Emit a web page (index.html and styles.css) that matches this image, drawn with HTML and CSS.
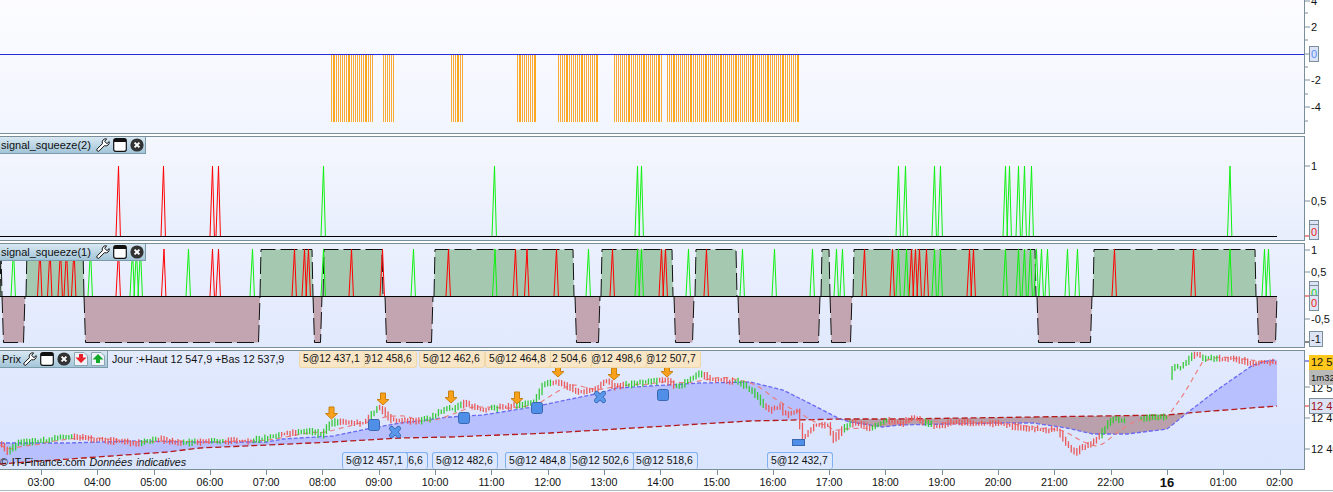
FILE: index.html
```html
<!DOCTYPE html>
<html lang="fr">
<head>
<meta charset="utf-8">
<title>Prix</title>
<link rel="stylesheet" href="styles.css">
</head>
<body>
<svg class="defs" width="0" height="0" aria-hidden="true">
  <symbol id="i-wrench" viewBox="0 0 14 14"><path d="M10 .8a3.6 3.6 0 0 0-3.6 4.9L1.2 10.9a1.4 1.4 0 0 0 2 2l5.2-5.2A3.6 3.6 0 0 0 13.2 3.6L11 5.6 8.6 3.4 10.6.9Z" fill="#fff" stroke="#111"/></symbol>
  <symbol id="i-window" viewBox="0 0 14 14"><rect x=".7" y=".7" width="12.6" height="12.6" rx="2" fill="#fff" stroke="#111" stroke-width="1.2"/><rect x="1" y="1" width="12" height="3" fill="#111"/></symbol>
  <symbol id="i-close" viewBox="0 0 14 14"><circle cx="7" cy="7" r="6.6" fill="#333"/><path d="M4.6 4.6l4.8 4.8M9.4 4.6L4.6 9.4" stroke="#fff" stroke-width="2"/></symbol>
  <symbol id="i-down" viewBox="0 0 14 14"><path d="M.5.5h9.5l3.5 3.5v9.5H.5Z" fill="#eef3fa" stroke="#8fa5b5"/><path d="M5 2h4v3.5h3.5L7 11 1.500 5.500H5Z" fill="#e8222a"/></symbol>
  <symbol id="i-up" viewBox="0 0 14 14"><path d="M.5.5h9.5l3.5 3.500v9.500H.5Z" fill="#eef3fa" stroke="#8fa5b5"/><path d="M7 2l5.500 5.500H9V11H5V7.500H1.500Z" fill="#12a82a"/></symbol>
</svg>
<main class="chart">
  <section class="pane pane-osc">
    <div class="plot plot-osc"><svg id="p1" class="layer" viewBox="0 0 1304 133" width="1304" height="133"></svg></div>
    <svg class="axis" viewBox="1305 0 28 134" width="28" height="134">
      <path class="tick" d="M1305 1h5M1305 13h3M1305 27h5M1305 40h3M1305 54h5M1305 67h3M1305 80h5M1305 94h3M1305 107h5M1305 121h3"/>
      <text x="1311" y="5">4</text><text x="1311" y="31">2</text>
      <text x="1311" y="84">-2</text><text x="1311" y="111">-4</text>
      <rect class="box" x="1309.5" y="46.5" width="9" height="15"/><text class="t-blue" x="1311" y="58">0</text>
    </svg>
  </section>
  <section class="pane pane-s2">
    <div class="plot plot-s2">
      <svg id="p2" class="layer" viewBox="0 137 1304 103" width="1304" height="103"></svg>
      <div class="legend">
        <span class="legend-name">signal_squeeze(2)</span>
        <svg class="ico"><use href="#i-wrench"/></svg><svg class="ico"><use href="#i-window"/></svg><svg class="ico"><use href="#i-close"/></svg>
      </div>
    </div>
    <svg class="axis" viewBox="1305 136 28 105" width="28" height="105">
      <path class="tick" d="M1305 166h5M1305 201h5"/><path class="tick-red" d="M1305 236h4"/>
      <text x="1311" y="170">1</text><text x="1311" y="205">0,5</text>
      <rect class="box" x="1309.5" y="220.5" width="9" height="19"/><path class="tick" d="M1310 224.5h8"/>
      <text class="t-red" x="1311" y="236">0</text>
    </svg>
  </section>
  <section class="pane pane-s1">
    <div class="plot plot-s1">
      <svg id="p3" class="layer" viewBox="0 244 1304 103" width="1304" height="103"></svg>
      <div class="legend">
        <span class="legend-name">signal_squeeze(1)</span>
        <svg class="ico"><use href="#i-wrench"/></svg><svg class="ico"><use href="#i-window"/></svg><svg class="ico"><use href="#i-close"/></svg>
      </div>
    </div>
    <svg class="axis" viewBox="1305 243 28 105" width="28" height="105">
      <path class="tick" d="M1305 250h5M1305 272h5M1305 319h5"/><path class="tick-red" d="M1305 296h4"/><path class="tick-dark" d="M1305 342h4"/>
      <text x="1311" y="254">1</text><text x="1311" y="276">0,5</text><text x="1311" y="323">-0,5</text>
      <rect class="box" x="1309.5" y="281.5" width="9" height="15"/><text class="t-dark" x="1311" y="293">0</text>
      <rect class="box" x="1309.5" y="285.5" width="9" height="15"/><text class="t-green" x="1311" y="297">0</text>
      <rect class="box" x="1309.5" y="295.5" width="9" height="15"/><text class="t-red" x="1311" y="307">0</text>
      <rect class="box" x="1309.5" y="331.5" width="13" height="15"/><text x="1311" y="343">-1</text>
    </svg>
  </section>
  <section class="pane pane-price">
    <div class="plot plot-price">
      <svg id="p4" class="layer" viewBox="0 351 1304 118" width="1304" height="118"></svg>
      <div class="legend legend-price">
        <span class="legend-name">Prix</span>
        <svg class="ico"><use href="#i-wrench"/></svg><svg class="ico"><use href="#i-window"/></svg><svg class="ico"><use href="#i-close"/></svg><svg class="ico"><use href="#i-down"/></svg><svg class="ico"><use href="#i-up"/></svg>
      </div>
      <p class="quote">Jour :+Haut 12 547,9 +Bas 12 537,9</p>
      <span class="tag tag-sell" style="left:635px">5@12 507,7</span>
      <span class="tag tag-sell" style="left:581px">5@12 498,6</span>
      <span class="tag tag-sell" style="left:526px">5@12 504,6</span>
      <span class="tag tag-sell" style="left:485px">5@12 464,8</span>
      <span class="tag tag-sell" style="left:419px">5@12 462,6</span>
      <span class="tag tag-sell" style="left:351px">5@12 458,6</span>
      <span class="tag tag-sell" style="left:299px">5@12 437,1</span>
      <p class="credit">© IT-Finance.com <em>Données indicatives</em></p>
      <span class="tag tag-buy" style="left:767px">5@12 432,7</span>
      <span class="tag tag-buy" style="left:632px">5@12 518,6</span>
      <span class="tag tag-buy" style="left:568px">5@12 502,6</span>
      <span class="tag tag-buy" style="left:505px">5@12 484,8</span>
      <span class="tag tag-buy" style="left:432px">5@12 482,6</span>
      <span class="tag tag-buy" style="left:362px">5@12 466,6</span>
      <span class="tag tag-buy" style="left:342px">5@12 457,1</span>
    </div>
    <svg class="axis" viewBox="1305 350 28 120" width="28" height="120">
      <path class="tick" d="M1305 387h5M1305 418h5M1305 449h5"/><path class="tick-red" d="M1305 406h4"/><path class="tick-blue" d="M1305 361h4"/>
      <text x="1311" y="392">12 519,0</text><text x="1311" y="422">12 450,0</text><text x="1311" y="453">12 400,0</text>
      <rect class="last" x="1309" y="355" width="26" height="15"/><text x="1311" y="366">12 542,7</text>
      <rect class="timer" x="1309" y="370" width="26" height="15"/><text class="t-timer" x="1311" y="381">1m32</text>
      <rect class="box" x="1309.5" y="398.5" width="26" height="15"/><text class="t-darkred" x="1311" y="410">12 471,2</text>
    </svg>
  </section>
  <footer class="time-axis">
    <span class="hour">03:00</span><span class="hour">04:00</span><span class="hour">05:00</span><span class="hour">06:00</span><span class="hour">07:00</span><span class="hour">08:00</span><span class="hour">09:00</span><span class="hour">10:00</span><span class="hour">11:00</span><span class="hour">12:00</span><span class="hour">13:00</span><span class="hour">14:00</span><span class="hour">15:00</span><span class="hour">16:00</span><span class="hour">17:00</span><span class="hour">18:00</span><span class="hour">19:00</span><span class="hour">20:00</span><span class="hour">21:00</span><span class="hour">22:00</span><span class="hour hour-day">16</span><span class="hour">01:00</span><span class="hour">02:00</span>
  </footer>
</main>
<script src="chart.js"></script>
</body>
</html>
```
FILE: styles.css
```css
* { box-sizing: border-box; }
html, body { margin: 0; height: 492px; overflow: hidden; background: #fff; }
body { font: 10.7px "Liberation Sans", Arial, sans-serif; color: #111; }
.defs { position: absolute; }
.chart { display: flex; flex-direction: column; gap: 2px; width: 1333px; }
.pane { display: flex; flex: none; }
.pane-osc { height: 134px; }
.pane-s2 { height: 105px; }
.pane-s1 { height: 105px; }
.pane-price { height: 120px; }
.plot {
  position: relative;
  width: 1305px;
  flex: none;
  border: 1px solid #7b8f9b;
  border-left: 0;
  overflow: hidden;
}
.plot-osc { border-top: 0; background: linear-gradient(#fcfcff, #f1f5fe); }
.plot-s2 { background: linear-gradient(#f5f7fe, #e7eefc); }
.plot-s1 { background: linear-gradient(#ebf0fe, #e1e9fd); }
.plot-price { background: linear-gradient(#e3eafe, #d9e4fd); }
.layer { display: block; }
.axis { flex: none; display: block; font: 11px "Liberation Sans", Arial, sans-serif; fill: #111; overflow: hidden; }
.tick { stroke: #7b8f9b; fill: none; }
.tick-red { stroke: #e02020; fill: none; }
.tick-dark { stroke: #111; fill: none; }
.tick-blue { stroke: #2a2ae0; fill: none; }
.box { fill: #dbe3f4; stroke: #7b8f9b; }
.last { fill: #ffc81c; }
.timer { fill: #b9b9b9; }
.t-blue { fill: #5a8cff; }
.t-red { fill: #f01818; }
.t-green { fill: #20d020; }
.t-dark { fill: #333; }
.t-darkred { fill: #a01020; }
.t-timer { font-size: 9.5px; }
.legend {
  position: absolute;
  top: 0;
  left: 0;
  display: flex;
  align-items: center;
  gap: 3px;
  width: 146px;
  height: 17px;
  padding-left: 1px;
  font-size: 11px;
  background: linear-gradient(#d8e8f2, #a3c5d8);
  border: 1px solid #7b9aaa;
  border-width: 0 1px 1px 0;
}
.legend-name { width: 92px; flex: none; }
.legend-price { width: 108px; padding-left: 2px; }
.legend-price .legend-name { width: 18px; }
.ico { width: 14px; height: 14px; flex: none; }
.quote { position: absolute; top: 2px; left: 112px; margin: 0; white-space: nowrap; }
.tag {
  position: absolute;
  width: 66px;
  height: 17px;
  padding-left: 3px;
  line-height: 15px;
  white-space: nowrap;
  border: 1px solid;
  border-radius: 3px;
  font-size: 10.4px;
}
.tag-sell { top: 0; background: #f9e6c6; border-color: #efd7a8; border-top: 0; }
.tag-buy { bottom: 0; background: #dde8fe; border-color: #7fb0f0; border-bottom: 0; }
.credit { position: absolute; left: 0; bottom: 0; margin: 0; white-space: nowrap; line-height: 13px; word-spacing: 1px; }
.time-axis {
  display: flex;
  flex: none;
  height: 21px;
  padding-left: 12.85px;
  margin-top: -2px;
  border-bottom: 1px solid #a9b9c4;
}
.hour {
  position: relative;
  width: 56.3px;
  flex: none;
  padding-top: 6px;
  text-align: center;
  line-height: 13px;
}
.hour::before {
  content: "";
  position: absolute;
  top: 0;
  left: 50%;
  width: 1px;
  height: 5px;
  background: #7b8f9b;
}
.hour-day { font-weight: bold; font-size: 13px; }
```
FILE: chart.js
```js
(function () {
  var NS = 'http://www.w3.org/2000/svg';
  function add(svg, tag, attrs) {
    var el = document.createElementNS(NS, tag);
    for (var k in attrs) el.setAttribute(k, attrs[k]);
    svg.appendChild(el);
    return el;
  }
  function poly(pts) {
    return pts.map(function (p, i) { return (i ? 'L' : 'M') + p[0] + ' ' + p[1]; }).join('');
  }

  /* Pane 1: orange bars, walked on one global grid so the double-width bars recur every ~15px */
  var p1 = document.getElementById('p1');
  var groups = [[331, 373], [383, 394], [451, 463], [517, 536], [558, 598], [614, 662], [667, 798]];
  function inGroup(x) {
    return groups.some(function (g) { return x >= g[0] && x < g[1]; });
  }
  var thin = '', thick = '', gx = 331, nextThick = 333;
  while (gx < 798) {
    var wide = gx >= nextThick - 0.5;
    var bw = wide ? 2 : 1;
    if (wide) nextThick += 15.47;
    if (inGroup(gx)) {
      var bar = 'M' + gx + ' 55h' + bw + 'v67h-' + bw + 'z';
      if (wide) thick += bar; else thin += bar;
    }
    gx += bw + 1;
  }
  add(p1, 'path', { d: thin, fill: '#f8ab38', 'shape-rendering': 'crispEdges' });
  add(p1, 'path', { d: thick, fill: '#fda71f', 'shape-rendering': 'crispEdges' });
  add(p1, 'path', { d: 'M0 54.5H1304', stroke: '#2a2ae0', fill: 'none' });

  /* Spikes */
  function spikes(svg, list, base, apex, color) {
    var d = list.map(function (x) {
      return 'M' + (x - 2) + ' ' + base + 'L' + (x + 0.5) + ' ' + apex + 'L' + (x + 2.4) + ' ' + base;
    }).join('');
    add(svg, 'path', { d: d, stroke: color, fill: 'none', 'stroke-width': 1 });
  }

  /* Pane 2 */
  var p2 = document.getElementById('p2');
  spikes(p2, [118, 163, 212, 218], 236, 166, '#ff0000');
  spikes(p2, [323, 494, 637, 641, 898, 905, 934, 940, 1005, 1009, 1018, 1024, 1031, 1229.5], 236, 166, '#10f010');
  add(p2, 'path', { d: 'M0 236.5H1277', stroke: '#000', fill: 'none' });

  /* Pane 3 */
  var p3 = document.getElementById('p3');
  var green = [[0, 2], [26, 84], [260, 313], [323, 383], [434, 574], [601, 673], [695, 737], [821, 830], [853, 1036], [1093, 1256]];
  var pink = [[2, 25], [84, 260], [313, 322], [385, 433], [575, 600], [674, 694], [738, 820], [830, 852], [1037, 1092], [1257, 1277]];
  green.forEach(function (s) {
    add(p3, 'path', {
      d: 'M' + s[0] + ' 296L' + (s[0] + 1) + ' 249.5H' + (s[1] - 1) + 'L' + s[1] + ' 296',
      fill: '#a5c9b0', stroke: '#111', 'stroke-dasharray': '17 5'
    });
  });
  pink.forEach(function (s) {
    add(p3, 'path', {
      d: 'M' + s[0] + ' 296L' + (s[0] + 1.5) + ' 342.5H' + (s[1] - 1.5) + 'L' + s[1] + ' 296',
      fill: '#c2a5b0', stroke: '#111', 'stroke-dasharray': '17 5'
    });
  });
  spikes(p3, [39.5, 49.5, 60, 66, 73.5, 118, 163.5, 212, 218, 294, 304, 308, 351, 382, 448, 515, 526.5, 556, 612, 661, 665, 706, 864, 892, 911, 915, 919, 926, 969, 973, 1114, 1193], 296, 249, '#ff0000');
  spikes(p3, [13, 90, 132, 136, 140, 188, 252, 323, 413, 494.5, 588, 637, 641, 688, 742, 774, 812, 836, 842, 898, 906, 934, 940, 1005, 1018, 1024, 1030, 1036, 1041, 1047, 1067, 1077, 1229.5, 1264, 1268], 296, 249, '#10f010');
  add(p3, 'path', { d: 'M0 296.5H1277', stroke: '#000', fill: 'none' });

  /* Pane 4: price */
  var p4 = document.getElementById('p4');
  var slow = [[0, 464], [83, 458], [167, 452], [200, 448], [267, 445], [333, 442], [400, 438], [450, 437], [550, 433], [650, 427], [750, 421], [840, 419], [900, 419], [1033, 417], [1167, 415], [1187, 413], [1277, 406]];
  var fast = [[0, 443], [67, 443], [133, 441], [200, 442], [267, 442], [283, 439], [333, 436], [367, 429], [400, 423], [450, 417], [483, 415], [533, 407], [600, 393], [617, 388], [650, 386], [700, 383], [750, 382], [783, 390], [803, 400], [840, 419], [850, 422], [883, 427], [900, 425], [1000, 423], [1033, 423], [1067, 428], [1093, 434], [1127, 434], [1167, 429], [1187, 413], [1217, 390], [1240, 374], [1253, 365], [1267, 361], [1277, 360]];
  var price = [[0, 445], [7, 452], [17, 443], [50, 440], [60, 437], [73, 437], [100, 440], [133, 443], [157, 439], [177, 443], [217, 441], [250, 441], [287, 433], [310, 431], [320, 435], [325, 428], [333, 422], [350, 423], [363, 423], [378, 407], [390, 420], [413, 422], [430, 418], [447, 407], [450, 410], [463, 403], [480, 410], [517, 405], [533, 403], [543, 383], [557, 382], [577, 392], [593, 390], [605, 380], [613, 387], [637, 383], [663, 380], [677, 387], [698, 373], [710, 379], [737, 382], [750, 390], [767, 410], [780, 407], [783, 415], [797, 412], [800, 433], [803, 438], [813, 425], [827, 425], [832, 440], [840, 430], [853, 422], [867, 428], [887, 420], [900, 423], [913, 417], [933, 427], [950, 422], [1000, 424], [1027, 429], [1057, 430], [1063, 442], [1073, 452], [1093, 442], [1110, 420], [1125, 420], [1140, 418], [1167, 417], [1169, 368], [1180, 367], [1193, 353], [1203, 358], [1233, 359], [1250, 363], [1277, 362]];

  function at(line, x) {
    for (var i = 1; i < line.length; i++) {
      if (x <= line[i][0]) {
        var a = line[i - 1], b = line[i];
        return a[1] + (b[1] - a[1]) * (x - a[0]) / (b[0] - a[0]);
      }
    }
    return line[line.length - 1][1];
  }
  function slice(line, x0, x1) {
    return line.filter(function (p) { return p[0] >= x0 && p[0] <= x1; });
  }
  function band(x0, x1, color) {
    var top = slice(fast, x0, x1), bottom = slice(slow, x0, x1).reverse();
    add(p4, 'path', { d: poly(top.concat(bottom)) + 'Z', fill: color });
  }
  band(0, 840, '#b8c0fd');
  band(840, 1187, '#baa0ac');
  band(1187, 1277, '#b8c0fd');

  add(p4, 'path', { d: poly(slow), stroke: '#b41a1a', 'stroke-width': 1.3, 'stroke-dasharray': '6 3', fill: 'none' });
  add(p4, 'path', { d: poly(fast), stroke: '#6a6af2', 'stroke-width': 1.3, 'stroke-dasharray': '4 2', fill: 'none' });

  var sma = [];
  for (var sx = 0; sx <= 1277; sx += 2) {
    var sum = 0, n = 0;
    for (var w = Math.max(0, sx - 34); w <= sx; w += 2) { sum += at(price, w); n++; }
    sma.push([sx, +(sum / n).toFixed(1)]);
  }
  add(p4, 'path', { d: poly(sma), stroke: '#ea8080', 'stroke-width': 1.2, 'stroke-dasharray': '5 4', fill: 'none' });

  /* Candles: about 3px apart, colour holds for short runs */
  var seed = 7;
  function rnd() { seed = (seed * 16807) % 2147483647; return seed / 2147483647; }
  var up = '', down = '', run = 0, rising = true;
  for (var x = 1; x < 1277; x += 2.8) {
    if ((x > 1125 && x < 1140) || (x > 1166 && x < 1170)) continue;
    var c0 = at(price, x - 2.8), c1 = at(price, x);
    if (run-- <= 0) {
      run = 2 + Math.floor(rnd() * 4);
      rising = at(price, x + 8) < at(price, x - 3);
      if (rnd() < 0.2) rising = !rising;
    }
    var top = Math.min(c0, c1) - 1 - rnd() * 3;
    var bot = Math.max(c0, c1) + 1 + rnd() * 3;
    var d = 'M' + x.toFixed(1) + ' ' + top.toFixed(1) + 'h1.3V' + bot.toFixed(1) + 'h-1.3z';
    if (rising) up += d; else down += d;
  }
  add(p4, 'path', { d: down, fill: '#ea5a5a' });
  add(p4, 'path', { d: up, fill: '#38ca38' });

  /* Markers */
  [[331.5, 407], [383, 393], [451, 391], [517, 392], [558, 365], [614, 368], [667, 365]].forEach(function (m) {
    var x = m[0], y = m[1];
    add(p4, 'path', {
      d: 'M' + (x - 2.5) + ' ' + y + 'h5v6.5h3.5L' + x + ' ' + (y + 12) + 'L' + (x - 6) + ' ' + (y + 6.5) + 'h3.5z',
      fill: '#f9a11b', stroke: '#c8800f'
    });
  });
  [[374, 425], [464, 418], [537, 408], [663, 395]].forEach(function (m) {
    add(p4, 'rect', { x: m[0] - 5.5, y: m[1] - 5.5, width: 11, height: 11, rx: 2, fill: '#4f8fe8', stroke: '#3a68b0' });
  });
  add(p4, 'rect', { x: 792.5, y: 439.5, width: 12, height: 6, fill: '#4f8fe8', stroke: '#3a68b0' });
  [[395, 432], [600, 397]].forEach(function (m) {
    add(p4, 'path', { d: 'M' + (m[0] - 3.5) + ' ' + (m[1] - 3.5) + 'l7 7m0-7l-7 7', stroke: '#3a68b0', 'stroke-width': 5, 'stroke-linecap': 'round', fill: 'none' });
    add(p4, 'path', { d: 'M' + (m[0] - 3.5) + ' ' + (m[1] - 3.5) + 'l7 7m0-7l-7 7', stroke: '#5a98ec', 'stroke-width': 3.4, 'stroke-linecap': 'round', fill: 'none' });
  });
})();
```
